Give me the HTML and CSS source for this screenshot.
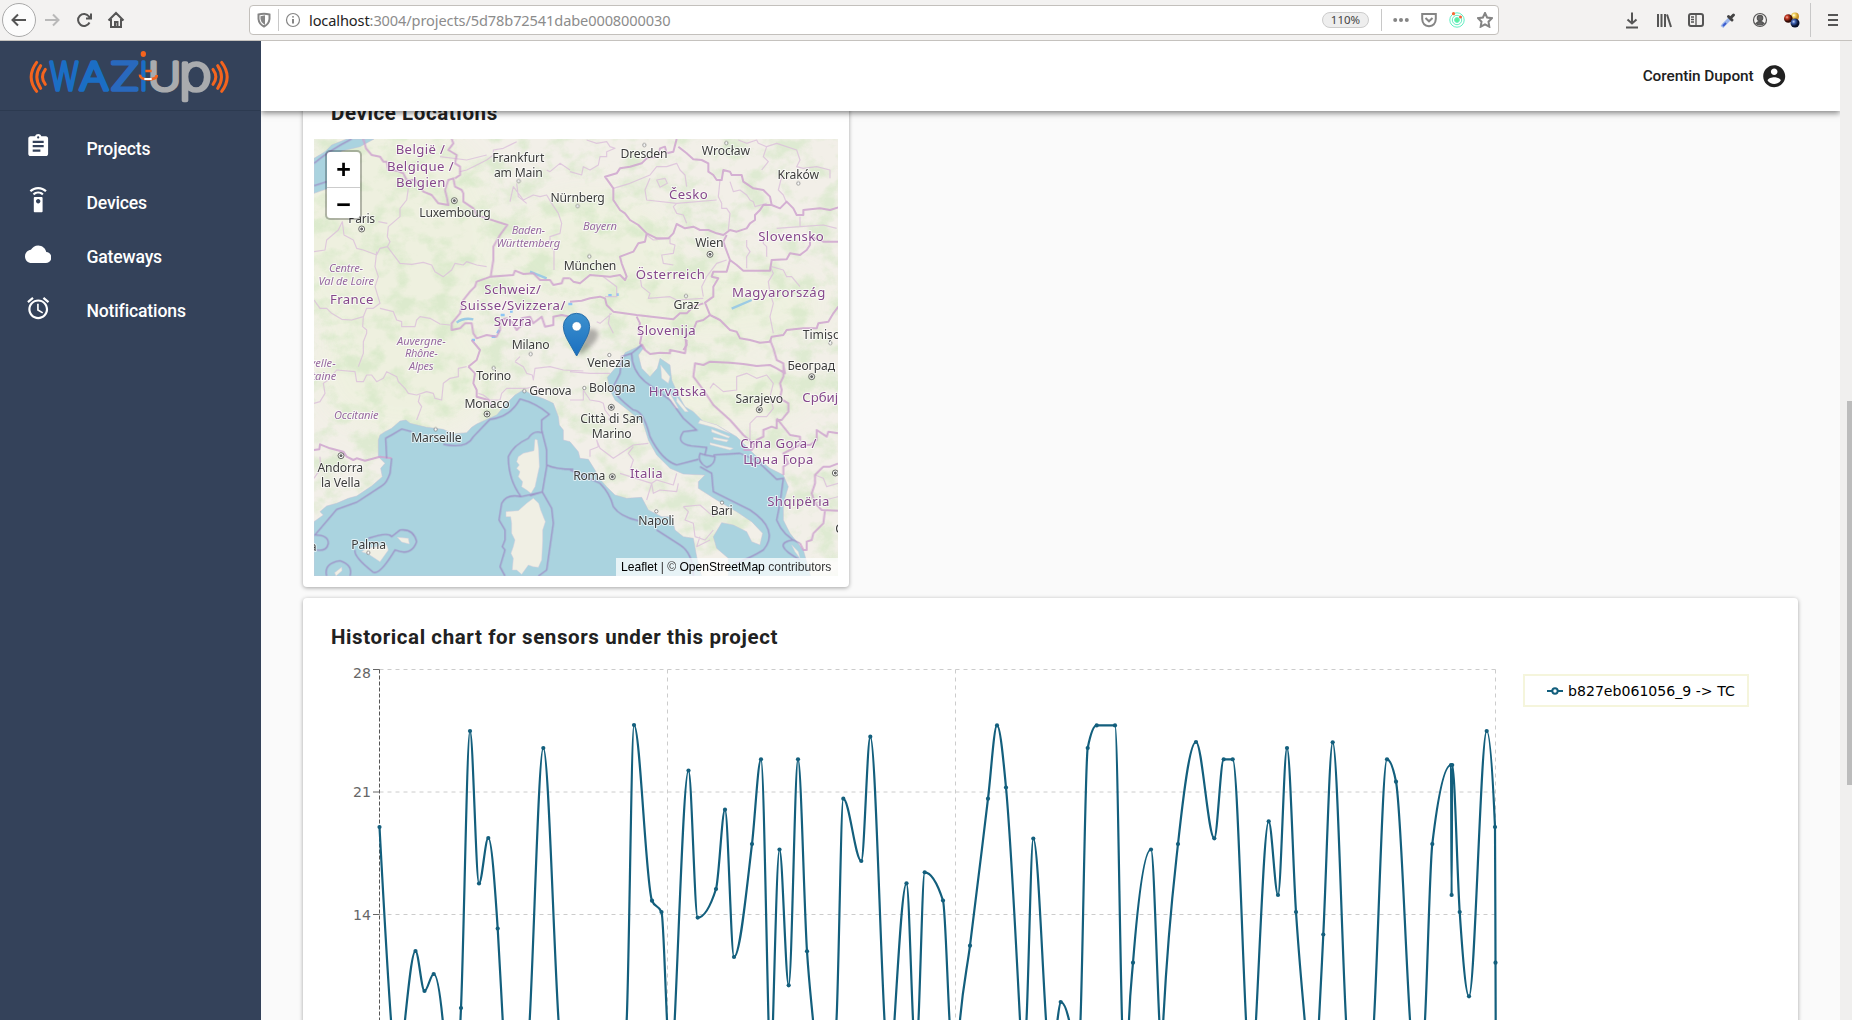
FILE: index.html
```html
<!DOCTYPE html>
<html lang="en">
<head>
<meta charset="utf-8">
<title>Waziup</title>
<link rel="stylesheet" href="styles.css">
</head>
<body>
<div class="browser">
  <div class="tools-left">
    <span class="back"><svg width="18" height="18" viewBox="0 0 18 18" class="ic"><path d="M16 9H3M8 3.5L2.500 9L8 14.500"/></svg></span>
    <svg width="18" height="18" viewBox="0 0 18 18" class="ic faded"><path d="M2 9H15M10 3.500L15.500 9L10 14.500"/></svg>
    <svg width="18" height="18" viewBox="0 0 18 18" class="ic"><path d="M14.500 11.500A6 6 0 1 1 14 5.500L15.500 7M16 2.500V7.500H11"/></svg>
    <svg width="18" height="18" viewBox="0 0 18 18" class="ic"><path d="M1.500 9.500L9 2L16.500 9.500M4 8V16H14V8M8 16V11H10.500V16"/></svg>
  </div>
  <div class="urlbar">
    <svg width="16" height="16" viewBox="0 0 16 16" class="ic grey"><path d="M2.500 2.500Q8 .8 13.500 2.500V7Q13 12 8 14.500Q3 12 2.500 7Z"/><path d="M8 4.500V11Q5.800 9.500 5.500 7V5Z" fill="#888"/></svg>
    <i class="sep"></i>
    <svg width="16" height="16" viewBox="0 0 16 16" class="ic grey thin"><circle cx="8" cy="8" r="6.500"/><path d="M8 7V11.500M8 4.200V5.600" stroke-width="2"/></svg>
    <span class="url"><b>localhost</b>:3004/projects/5d78b72541dabe0008000030</span>
    <span class="pct">110%</span>
    <i class="sep"></i>
    <svg class="dots" width="16" height="16" viewBox="0 0 16 16" fill="#858585"><circle cx="2.200" cy="8" r="2"/><circle cx="8" cy="8" r="2"/><circle cx="13.800" cy="8" r="2"/></svg>
    <svg width="16" height="16" viewBox="0 0 16 16" class="ic grey"><path d="M1.200 2H14.800V7Q14.500 13.500 8 14.300Q1.500 13.500 1.200 7ZM4.500 6L8 9.300L11.500 6"/></svg>
    <svg width="16" height="16" viewBox="0 0 16 16" fill="none" stroke="#62eec1"><circle cx="8" cy="8" r="7.200"/><circle cx="8" cy="8" r="4.700"/><circle cx="8" cy="8" r="2.400" fill="#5df09b"/><circle cx="4.500" cy="1.700" r="1.600" fill="#f66a35" stroke="none"/><circle cx="11.500" cy="5" r="1.500" fill="#f6613b" stroke="none"/></svg>
    <svg width="16" height="16" viewBox="0 0 16 16" class="ic grey"><path d="M8 1L10.100 5.500L15 6.200L11.500 9.700L12.300 14.700L8 12.300L3.700 14.700L4.500 9.700L1 6.200L5.900 5.500Z"/></svg>
  </div>
  <div class="tools-right">
    <svg width="16" height="18" viewBox="0 0 16 18" class="ic"><path d="M8 1.500V12.500M3.500 8.500L8 12.500L12.500 8.500M2 16.500H14"/></svg>
    <svg width="16" height="18" viewBox="0 0 16 18" class="ic"><path d="M2 3V16M5.500 3V16M9 3V16M11 3.500L15 16" /></svg>
    <svg width="16" height="18" viewBox="0 0 16 18" class="ic"><rect x="1" y="3" width="14" height="12" rx="2"/><path d="M8 3V15M3 6H6M3 8.500H6M3 11H6" stroke-width="1.300"/></svg>
    <svg width="16" height="18" viewBox="0 0 16 18"><path d="M10 7.500L3.500 14L2 16" fill="none" stroke="#9ab4e8" stroke-width="3.500"/><path d="M6 12L3 15" stroke="#3b5dd0" stroke-width="2"/><path d="M8.500 5.500L12 9M10.500 7L13.500 4" stroke="#444" stroke-width="3" stroke-linecap="round"/></svg>
    <svg width="16" height="18" viewBox="0 0 16 18" class="ic thin"><circle cx="8" cy="9" r="6.500"/><circle cx="8" cy="7" r="2.700" fill="#666"/><path d="M4 12.500Q8 8.500 12 12.500Q8 15.500 4 12.500Z" fill="#666"/></svg>
    <svg width="16" height="18" viewBox="0 0 16 18"><defs><radialGradient id="ry" cx=".35" cy=".35"><stop stop-color="#fff"/><stop offset=".4" stop-color="#f3d765"/><stop offset="1" stop-color="#c9932b"/></radialGradient><radialGradient id="rr" cx=".35" cy=".35"><stop stop-color="#f6b5a0"/><stop offset=".4" stop-color="#c23622"/><stop offset="1" stop-color="#330b06"/></radialGradient><radialGradient id="rb" cx=".35" cy=".35"><stop stop-color="#c7d5f6"/><stop offset=".4" stop-color="#3e62b4"/><stop offset="1" stop-color="#07102c"/></radialGradient></defs><circle cx="11" cy="5.500" r="4" fill="url(#ry)"/><circle cx="4.300" cy="7.500" r="4.300" fill="url(#rr)"/><circle cx="11" cy="12" r="4.500" fill="url(#rb)"/></svg>
    <i class="sep"></i>
    <svg width="14" height="18" viewBox="0 0 14 18" class="ic"><path d="M2 4H12M2 9H12M2 14H12"/></svg>
  </div>
</div>
<div class="app">
  <aside class="sidebar">
    <div class="brand">
      <svg width="201" height="52" viewBox="88 150 603 156" fill="none">
        <g stroke="#f4641e" stroke-width="9" stroke-linecap="round"><path d="M111 187Q78 231 111 274M123 197Q100 231 123 265M137 208Q120 231 137 253M666 187Q699 231 666 274M654 197Q677 231 654 265M640 208Q657 231 640 253"/></g>
        <g class="word">
          <text x="150" y="271" class="blue" textLength="86" lengthAdjust="spacingAndGlyphs">W</text>
          <text x="239" y="271" class="blue" textLength="88" lengthAdjust="spacingAndGlyphs">A</text>
          <text x="330" y="271" class="blue z" textLength="90" lengthAdjust="spacingAndGlyphs">Z</text>
          <text x="420" y="271" class="blue" textLength="23" lengthAdjust="spacingAndGlyphs">I</text>
          <text x="446" y="271" class="silver" textLength="98" lengthAdjust="spacingAndGlyphs">U</text>
          <text x="537" y="271" class="silver low" textLength="99" lengthAdjust="spacingAndGlyphs">p</text>
        </g>
        <ellipse cx="431" cy="162" rx="8" ry="9" fill="#f4641e"/>
        <path d="M421 224Q420 238 445 238Q472 238 471 225M437 213H456" stroke="#f4641e" stroke-width="8"/><path d="M434 237H456" stroke="#fff" stroke-width="6"/>
      </svg>
    </div>
    <nav>
      <a><svg viewBox="0 0 24 24"><path d="M19 3h-4.180C14.400 1.840 13.300 1 12 1s-2.400.84-2.820 2H5c-1.100 0-2 .9-2 2v14c0 1.100.9 2 2 2h14c1.100 0 2-.9 2-2V5c0-1.100-.9-2-2-2zm-7 0c.55 0 1 .45 1 1s-.45 1-1 1-1-.45-1-1 .45-1 1-1zm2 14H7v-2h7v2zm3-4H7v-2h10v2zm0-4H7V7h10v2z"/></svg><span>Projects</span></a>
      <a><svg viewBox="0 0 24 24"><path d="M15 9H9c-.55 0-1 .45-1 1v12c0 .55.450 1 1 1h6c.55 0 1-.45 1-1V10c0-.55-.45-1-1-1zm-3 6c-1.100 0-2-.9-2-2s.9-2 2-2 2 .9 2 2-.9 2-2 2zM7.050 6.050l1.410 1.410C9.370 6.560 10.620 6 12 6s2.630.56 3.540 1.460l1.410-1.410C15.680 4.780 13.930 4 12 4s-3.680.78-4.950 2.050zM12 0C8.960 0 6.210 1.230 4.220 3.220l1.410 1.410C7.260 3.010 9.510 2 12 2s4.740 1.010 6.360 2.640l1.410-1.410C17.790 1.230 15.040 0 12 0z"/></svg><span>Devices</span></a>
      <a><svg viewBox="0 0 24 24"><path d="M19.350 10.040C18.670 6.590 15.640 4 12 4 9.110 4 6.600 5.640 5.350 8.040 2.340 8.360 0 10.910 0 14c0 3.310 2.690 6 6 6h13c2.760 0 5-2.240 5-5 0-2.640-2.050-4.780-4.650-4.960z"/></svg><span>Gateways</span></a>
      <a><svg viewBox="0 0 24 24"><path d="M22 5.720l-4.600-3.860-1.290 1.530 4.600 3.860L22 5.720zM7.880 3.390L6.600 1.860 2 5.710l1.290 1.530 4.590-3.850zM12.500 8H11v6l4.750 2.850.75-1.230-4-2.370V8zM12 4c-4.970 0-9 4.030-9 9s4.020 9 9 9c4.970 0 9-4.030 9-9s-4.030-9-9-9zm0 16c-3.870 0-7-3.130-7-7s3.130-7 7-7 7 3.130 7 7-3.130 7-7 7z"/></svg><span>Notifications</span></a>
    </nav>
  </aside>
  <main>
    <header><span>Corentin Dupont</span><svg viewBox="0 0 24 24"><path d="M12 2C6.480 2 2 6.480 2 12s4.480 10 10 10 10-4.480 10-10S17.520 2 12 2zm0 3c1.660 0 3 1.340 3 3s-1.340 3-3 3-3-1.340-3-3 1.340-3 3-3zm0 14.200c-2.500 0-4.710-1.280-6-3.220.03-1.990 4-3.080 6-3.080 1.990 0 5.970 1.090 6 3.080-1.290 1.940-3.500 3.220-6 3.220z"/></svg></header>
    <div class="content">
      <section class="card map-card">
        <h2>Device Locations</h2>
        <div class="map">
          <svg class="tiles" width="524" height="437" viewBox="0 0 1572 1311">
            <defs>
              <filter id="blur" x="-30%" y="-30%" width="160%" height="160%"><feGaussianBlur stdDeviation="45"/></filter>
              <filter id="relief" x="0" y="0" width="100%" height="100%" color-interpolation-filters="sRGB"><feTurbulence type="fractalNoise" baseFrequency=".014 .017" numOctaves="5" seed="8"/><feColorMatrix values="0 0 0 0 .80  0 0 0 0 .90  0 0 0 0 .74  3.600 0 0 0 -1.600"/></filter>
              <linearGradient id="pin" x2="0" y2="1"><stop stop-color="#3d91ce"/><stop offset="1" stop-color="#1a6fc0"/></linearGradient>
            </defs>
            <rect width="1572" height="1311" fill="#f2efe8"/>
            <g filter="url(#blur)" fill="#eef1df" opacity=".9"><ellipse cx="230" cy="300" rx="330" ry="340"/><ellipse cx="280" cy="690" rx="270" ry="200"/><ellipse cx="830" cy="330" rx="260" ry="170"/><ellipse cx="1200" cy="500" rx="330" ry="120"/><ellipse cx="1250" cy="760" rx="240" ry="80"/></g>
            <rect width="1572" height="1311" filter="url(#relief)" opacity=".5"/>
            <g class="sea">
              <path transform="translate(-42,-117)" d="M42 175L75 155L95 135L140 117H222L180 140L125 153L95 190L85 265L42 280Z"/>
              <path transform="translate(-42,603)" d="M42 545L70 525L60 515L80 498L110 490L145 475L170 468L215 438L247 410L242 385L255 370L235 350L235 300L240 285L255 275L275 265L300 243L318 240L330 250L380 262L430 268L460 282L500 278L515 262L530 252L545 245L590 225L620 190L645 165L670 150L700 165L735 178L760 190L775 230L778 255L790 270L790 300L810 305L835 335L840 355L865 358L885 390L895 412L920 440L945 465L980 475L1025 472L1045 510L1085 530L1115 530L1125 570L1150 590L1180 595L1190 650L1205 708H42Z"/>
              <path transform="translate(768,603)" d="M215 12L200 22L165 38L150 70L135 85L112 112L120 150L135 180L180 215L220 250L235 300L260 345L300 385L340 402L405 405L385 425L385 445L440 480L500 515L545 545L578 580L570 615L545 605L530 575L490 555L455 548L430 590L440 625L475 655V708H722L700 630L660 580L640 540V490L655 440L640 405L600 385L570 360L500 290L440 255L400 245L370 215L345 200L325 165L305 120L300 75L270 55L262 85L240 110L215 85L205 45L220 25Z"/>
            </g>
            <g class="isle">
              <g transform="translate(-42,603)"><path d="M705 298L712 300L716 330L718 380L705 440L693 460L680 450L665 440L668 425L655 410L660 395L650 385L658 375L650 365L655 350L670 340L702 332Z"/><path d="M700 475L716 490L722 510L736 545L728 570L728 600L725 660L715 682L700 680L685 675L665 703L650 690L637 690L640 655L633 640L640 620L645 600L635 580L635 550L632 530L618 530L618 515L655 512L680 490Z"/><path d="M185 635L200 625L260 615L265 630L240 665L205 642Z"/><path d="M292 592L325 595L328 612L305 606Z"/><path d="M104 698L125 682L126 692L108 708Z"/></g>
              <g transform="translate(768,603)"><path d="M272 75L300 110L295 130L275 115ZM300 160L325 205L315 205L295 170ZM320 170L355 215L345 215L320 185ZM390 240L440 255L480 280L430 262L385 250ZM425 268L480 290L475 294L425 276ZM430 292L475 300L470 306L430 298ZM420 308L490 325L480 330L420 314ZM665 615L685 635L690 655L675 635Z"/></g>
            </g>
            <g class="lake" transform="translate(-42,-117)"><path d="M470 668Q490 652 520 658M690 515L740 535M1295 626L1355 600"/><path class="pond" d="M515 720h10M575 710h12M592 700l6 -10M602 645h12M630 634h8M805 612h12M925 586h10M948 584h8"/></g>
            <g class="thinb" transform="translate(-42,-117)"><path d="M42 455L75 450L80 420L115 390L127 365L132 405L160 420L170 445L190 450L230 465L240 445L262 440L270 425L262 410L265 380L300 350L300 325L320 300L325 265M262 440L300 490L335 493L370 487L395 495L405 515L430 530L455 510L465 490L490 495L500 485L530 495L560 500M262 370L235 365M230 455L225 500L235 530L225 560L240 610L220 625L200 625L190 650L155 660L125 658L95 640L80 625L60 625L42 600M240 625L280 635L290 660L305 665L305 680L345 680L350 660L360 650L390 655L420 672L450 675M190 650L188 680L200 690L200 700L190 725L190 760L175 800M480 215L500 210L520 200L560 180L580 165L580 150L610 145L650 125M420 170L500 180L560 165M630 305L640 260L670 300L700 285L720 290L740 285L755 310L775 340L785 370L780 400L750 410V440L762 450L762 510M650 250L655 290L680 310M740 210L750 215L780 190L810 210"/></g>
            <g class="thinb" transform="translate(768,-117)"><path d="M50 120L80 130L110 125L120 140L135 145L110 155L110 170L90 170L85 195L60 210L40 200L35 225L0 215M130 265L180 250L240 225L260 200L290 200L320 190L330 210L345 225L350 260M240 235L225 270L230 300L320 310L310 320L320 340L340 345L350 370M320 310L440 300M450 240L445 290L455 310L455 325L470 325L480 340L475 390M480 245L490 275L510 270L530 285L540 300L550 305L555 320L590 310M260 240L285 235L292 250L270 262ZM505 120L530 130L560 120L565 130L590 140L580 170L595 185L575 210M590 140L620 130L680 150L690 180L680 200L700 205L740 200L780 210V235M640 210L625 270L640 285L650 310M690 350L690 380L760 375L800 385M620 385L690 380M580 400L580 430L590 440L590 470M230 405L250 420L300 415L300 430L315 435L310 460L275 465L280 490L310 495M210 530L215 560L240 580L235 595L300 590L320 600L400 595M530 420V440L540 455L530 470V505M400 590L395 560L410 530L440 490L470 480M600 500L610 520L595 545L600 580L610 610L600 650L610 700M605 500L640 510L650 530L665 530L690 560M100 530L140 560L140 590L105 590M120 640L115 670L130 700M125 640L90 670L80 665"/></g>
            <g class="thinb" transform="translate(-42,603)"><path d="M42 190L60 185L75 160L70 130L85 120L110 90L165 95L170 125L190 125L200 105L215 105L230 125L250 115L260 95L290 110L295 125L315 145L325 160L350 165L380 155L400 160L405 175L425 180L430 130L450 115L475 110V85L500 80M360 165L355 185L365 200L350 240M535 160L550 165L570 180L600 180L605 160L620 145L680 145L700 140L740 155M645 65L670 80L680 100L697 105L700 120L705 85L750 80L790 90L850 93M660 50L645 65M42 415L62 385L60 350"/></g>
            <g class="thinb" transform="translate(768,603)"><path d="M0 95L60 100L120 100M0 180L40 180L40 150L60 180L90 185L100 190L105 210L120 230L115 240M60 350L60 330L85 320L80 300L90 325L130 355L160 335L190 315L235 310M190 320L175 340L190 360L180 390L205 420M150 400L245 430L260 420L310 435L320 400M245 430L230 480M245 430L250 460L270 450L320 455L325 430M340 500L355 515L345 540L370 550L375 590M340 500L390 495L430 530L440 515M375 590L405 600L430 570M420 145L430 130L460 155L500 150L500 110L530 100L560 115L590 105L610 130L600 170L610 205L590 230L560 230L540 250L540 305M390 590L380 620L420 600M735 405L760 415L770 440L805 430M735 490L765 480L805 470"/></g>
            <g class="border">
              <path transform="translate(-42,-117)" d="M190 117L198 145L215 165L240 170L250 185L260 185L265 210L290 212L310 220L320 240L345 240L370 275L395 285L415 310L445 315L440 290L435 270L445 240L460 235L465 260L485 270L490 280L490 305L520 325L530 345L560 355L622 375L600 405L580 440L580 480L572 530L600 528L640 525L645 512L670 522L700 520L720 540L750 540L760 555L785 550L790 535L810 535M455 117L460 130L445 150L470 165L465 190L480 200L480 225L465 235M572 530L530 545L525 560L510 575L490 600L480 640L455 670L455 690L480 685L495 670L515 670L520 700L530 715L560 705L590 710L600 690L600 660L620 655L635 665L650 690L665 675V655L690 650L700 670L725 650L735 680L760 675V650L785 645L810 650"/>
              <path transform="translate(768,-117)" d="M320 117L310 155L290 160L285 140L270 145L265 170L230 175L215 190L180 200L150 205L140 220L105 230L130 265L130 300L150 330L165 340L180 360L205 375L230 400L260 415L295 415L310 400L320 372L345 385L370 380L390 390L415 390L440 400L460 405L480 390L500 395L530 385L540 370L555 360L555 345L570 330L580 315L605 315L600 290L580 270L550 265L520 245L515 225L485 225L480 215L460 210L455 240L440 240L430 225L415 215V190L395 180L370 178L350 160L325 140M605 315L630 325L650 305L670 325L680 345L700 345L700 330L750 325L780 330L805 322M470 405L460 425L465 440L480 480L500 495L520 512L600 512L605 480L650 478L660 460L690 465L710 450L720 435L720 410L760 425L805 425M480 480L470 515L430 515L425 530L445 535L430 560V590L405 608L420 645L450 660L480 690L500 695L510 715L540 720L570 728L600 725L605 710L640 705L650 690L700 685L740 685L745 670L775 665L790 640L805 620M230 400L225 425L205 430L190 455L150 470L155 490L170 530L165 540L150 525L120 530L60 525L30 550L10 545L0 535M0 605L35 602L60 595L90 590L105 595L110 615L130 635L200 645L310 658L330 640L350 640L370 620L400 610M420 645L400 660L380 665L370 690L345 710L350 735L340 750M200 650L210 670L205 690L215 705L210 730L225 750"/>
              <path transform="translate(-42,603)" d="M42 330L58 328L60 313L90 325L130 335L140 350L160 360L170 355L195 362L240 350L275 355M505 80L525 100L520 130L530 150L530 170L565 180L580 205M515 0L540 30L530 60L505 80"/>
              <path transform="translate(768,603)" d="M215 12L225 30L240 42L270 38L300 40L300 30L325 35L345 40L350 0M600 0L610 25L620 60L640 70L640 110L630 130L635 150L630 175L655 190V215L635 240L620 240L620 265L605 260L580 270V290L560 300L555 315L520 285L480 240L430 195L400 150L370 110L375 70L400 75L420 65L480 68L520 72L560 78L600 75L620 85L645 100L640 75M620 235L660 285L690 290L690 315L720 315L740 300L740 270L770 290L775 275L805 280M555 315L545 330L520 330M640 405L640 380L655 370L640 340L660 330L690 315M805 370L780 380L760 380L735 405L735 430L725 460L735 490L755 510L805 512M765 510L760 550L730 580L725 600L710 605L710 630L700 630L690 610"/>
            </g>
            <g class="marine">
              <path transform="translate(-42,-117)" d="M42 190Q90 150 155 117M42 257L80 245"/>
              <path transform="translate(-42,603)" d="M260 355L257 295L275 285L305 267L335 275M430 313Q500 328 520 290L570 238Q630 232 660 177Q710 190 748 223L725 240V270L740 330V380L727 456L663 470Q625 420 625 350Q640 315 685 295Q700 270 725 278M740 375Q765 388 820 388M727 456L755 505L760 550L740 690L715 708M663 470Q620 460 605 490L597 540L615 570V600L607 620L615 630L600 680L615 708M727 456L690 467M275 355L270 400Q260 430 245 438L170 487L110 508L45 585Q85 585 85 610Q80 635 50 630M165 630Q160 650 220 697Q240 705 285 630Q335 650 350 605Q340 565 300 570L275 590Q265 575 205 595M80 708Q70 670 120 662Q160 675 150 708"/>
              <path transform="translate(768,603)" d="M215 15L185 40Q185 90 225 125L300 180L340 235L380 270L340 275Q315 310 365 318L410 322L405 345L435 350Q435 375 410 382Q380 365 390 340L405 345M185 40L155 50L150 100L130 140Q130 165 190 210Q220 210 240 290Q275 360 320 375L385 358M390 380L425 400L430 455L540 510Q630 570 580 630Q540 655 495 670M430 345L510 340Q560 360 580 380L620 418L640 415L630 490L620 540Q640 590 690 610L670 600Q600 610 690 660M0 390L90 430Q120 460 130 500Q150 530 205 542M260 570L330 615Q370 640 370 708"/>
            </g>
            <g class="dotm">
              <g transform="translate(-42,-117)"><circle cx="656" cy="243" r="5"/><circle cx="833" cy="318" r="5"/></g>
              <g transform="translate(768,-117)"><circle cx="223" cy="135" r="5"/><circle cx="469" cy="129" r="5"/><circle cx="685" cy="250" r="5"/><circle cx="58" cy="469" r="5"/><circle cx="348" cy="588" r="5"/><circle cx="781" cy="729" r="5"/></g>
              <g transform="translate(-42,603)"><circle cx="692" cy="42" r="5"/><circle cx="581" cy="84" r="5"/><circle cx="673" cy="153" r="5"/><circle cx="407" cy="268" r="5"/><circle cx="205" cy="638" r="5"/></g>
              <g transform="translate(768,603)"><circle cx="118" cy="45" r="5"/><circle cx="43" cy="144" r="5"/><circle cx="456" cy="488" r="5"/><circle cx="259" cy="514" r="5"/></g>
            </g>
            <g class="capital">
              <circle cx="421" cy="185" r="6"/><circle cx="143" cy="270" r="6"/><circle cx="1188" cy="346" r="6"/><circle cx="519" cy="825" r="6"/><circle cx="81" cy="950" r="6"/><circle cx="892" cy="805" r="6"/><circle cx="1493" cy="713" r="6"/><circle cx="1336" cy="812" r="6"/><circle cx="895" cy="1013" r="6"/><circle cx="1564" cy="1002" r="6"/>
            </g>
            <g class="capring">
              <circle cx="421" cy="185" r="9"/><circle cx="143" cy="270" r="9"/><circle cx="1188" cy="346" r="9"/><circle cx="519" cy="825" r="9"/><circle cx="81" cy="950" r="9"/><circle cx="892" cy="805" r="9"/><circle cx="1493" cy="713" r="9"/><circle cx="1336" cy="812" r="9"/><circle cx="895" cy="1013" r="9"/><circle cx="1564" cy="1002" r="9"/>
            </g>
            <g class="lbl" transform="translate(-42,-117)">
              <text x="655" y="187" textLength="156">Frankfurt</text><text x="655" y="231" textLength="146">am Main</text><text x="465" y="350" textLength="214">Luxembourg</text><text x="185" y="368" textLength="80">Paris</text><text x="833" y="307" textLength="163">Nürnberg</text><text x="870" y="509" textLength="158">München</text><text x="692" y="747" textLength="113">Milano</text>
              <g class="country"><text x="361" y="163" textLength="148">België /</text><text x="361" y="212" textLength="200">Belgique /</text><text x="362" y="261" textLength="148">Belgien</text><text x="155" y="611" textLength="130">France</text><text x="638" y="581" textLength="170">Schweiz/</text><text x="638" y="630" textLength="316">Suisse/Svizzera/</text><text x="638" y="678" textLength="114">Svizra</text></g>
              <g class="region"><text x="138" y="515" textLength="102">Centre-</text><text x="139" y="555" textLength="167">Val de Loire</text><text x="685" y="402" textLength="100">Baden-</text><text x="685" y="441" textLength="191">Württemberg</text><text x="364" y="734" textLength="146">Auvergne-</text><text x="364" y="772" textLength="98">Rhône-</text><text x="364" y="811" textLength="74">Alpes</text><text x="900" y="391" textLength="102">Bayern</text></g>
            </g>
            <g class="lbl" transform="translate(768,-117)">
              <text x="222" y="175" textLength="141">Dresden</text><text x="468" y="166" textLength="145">Wrocław</text><text x="685" y="237" textLength="125">Kraków</text><text x="418" y="442" textLength="85">Wien</text><text x="349" y="628" textLength="77">Graz</text><text x="698" y="717" class="start">Timișoara</text>
              <g class="country"><text x="355" y="298" textLength="116">Česko</text><text x="663" y="424" textLength="197">Slovensko</text><text x="301" y="536" textLength="207">Österreich</text><text x="626" y="591" textLength="280">Magyarország</text><text x="289" y="706" textLength="176">Slovenija</text></g>
            </g>
            <g class="lbl" transform="translate(-42,603)">
              <text x="581" y="121" textLength="105">Torino</text><text x="751" y="166" textLength="127">Genova</text><text x="561" y="203" textLength="135">Monaco</text><text x="409" y="306" textLength="151">Marseille</text><text x="121" y="395" textLength="137">Andorra</text><text x="122" y="440" textLength="118">la Vella</text><text x="206" y="626" textLength="104">Palma</text><text x="50" y="634" class="end">Valencia</text>
              <g class="region"><text x="107" y="80" class="end">Nouvelle-</text><text x="109" y="119" class="end">Aquitaine</text><text x="169" y="238" textLength="134">Occitanie</text></g>
            </g>
            <g class="lbl" transform="translate(768,603)">
              <text x="117" y="82" textLength="130">Venezia</text><text x="127" y="157" textLength="140">Bologna</text><text x="125" y="249" textLength="189">Città di San</text><text x="125" y="293" textLength="120">Marino</text><text x="58" y="421" textLength="96">Roma</text><text x="455" y="525" textLength="66">Bari</text><text x="259" y="556" textLength="109">Napoli</text><text x="568" y="190" textLength="143">Sarajevo</text><text x="724" y="90" textLength="143">Београд</text><text x="796" y="578" class="start">Скопје</text>
              <g class="country"><text x="323" y="168" textLength="173">Hrvatska</text><text x="697" y="185" class="start">Србија</text><text x="625" y="323" textLength="228">Crna Gora /</text><text x="625" y="372" textLength="210">Црна Гора</text><text x="229" y="415" textLength="98">Italia</text><text x="685" y="497" textLength="187">Shqipëria</text></g>
            </g>
            <path class="pin-shadow" d="M790 645L808 590Q820 562 845 572Q862 585 840 612Q815 640 790 648Z"/>
            <g transform="translate(768,-117)"><path d="M20 768L-10 715Q-20 695-20 680A39.500 40 0 0 1 59 680Q59 695 49 715Z" fill="url(#pin)" stroke="#286da8" stroke-width="3"/><circle cx="20" cy="679" r="14" fill="#fff" stroke="#2c77b4" stroke-width="2"/></g>
          </svg>
          <div class="zoomctl"><span>+</span><span>−</span></div>
          <div class="credit"><b>Leaflet</b> | © <b>OpenStreetMap</b> contributors</div>
        </div>
      </section>
      <section class="card chart-card">
        <h2>Historical chart for sensors under this project</h2>
        <div class="chart">
          <svg id="plot" width="1176" height="380" viewBox="340 660 1176 380">
            <g stroke="#ccc" stroke-dasharray="4 4" fill="none"><path d="M379.500 669.500H1495.500M379.500 792H1495.500M379.500 914.500H1495.500M667.500 669.500V1040M955.500 669.500V1040M1495.500 669.500V1040"/></g>
            <path d="M379.500 669.500V1040" stroke="#555" stroke-dasharray="4 2"/>
            <path d="M373 669.500H379.500M373 792H379.500M373 914.500H379.500" stroke="#666"/>
            <g class="axis"><text x="371" y="678">28</text><text x="371" y="797">21</text><text x="371" y="920">14</text></g>
          </svg>
          <div class="legend"><svg width="16" height="10" viewBox="0 0 16 10" fill="none" stroke="#135f7d" stroke-width="2"><path d="M0 5H5M11 5H16"/><circle cx="8" cy="5" r="2.700"/></svg><span>b827eb061056_9 -&gt; TC</span></div>
        </div>
      </section>
    </div>
  </main>
  <div class="scroll"><i></i></div>
</div>
<script src="chart.js"></script>
</body>
</html>
```
FILE: styles.css
```css
* { box-sizing: border-box; }
body { margin: 0; width: 1852px; height: 1020px; overflow: hidden; font-family: Roboto, sans-serif; color: #212121; display: flex; flex-direction: column; }
.browser { height: 41px; flex: none; background: #f3f2f1; border-bottom: 1px solid #c5c2be; display: flex; align-items: center; }
.ic { fill: none; stroke: #555; stroke-width: 2; }
.ic.grey { stroke: #858585; }
.ic.thin { stroke-width: 1.2; }
.ic.faded { stroke: #b9b9b9; }
.tools-left { width: 249px; padding: 0 0 1px 2px; display: flex; align-items: center; gap: 14px; }
.back { width: 34px; height: 34px; border: 1px solid #aaa; border-radius: 50%; background: #fcfcfc; display: flex; align-items: center; justify-content: center; margin-right: -7px; }
.urlbar { width: 1250px; height: 30px; border: 1px solid #c3c0bc; border-radius: 4px; background: #fff; display: flex; align-items: center; gap: 6px; padding: 0 5px 0 6px; }
.sep { width: 1px; height: 22px; background: #c8c8c8; flex: none; }
.url { font: 14.6px "Noto Sans", sans-serif; color: #8c8c8c; flex: 1; letter-spacing: -.12px; margin-left: 2px; }
.url b { font-weight: 400; color: #222; }
.pct { width: 47px; height: 16px; border-radius: 8px; background: #eee; border: 1px solid #ccc; font: 11.5px/14px "Noto Sans", sans-serif; text-align: center; color: #444; margin-right: 6px; }
.urlbar .dots { margin-left: 5px; }
.urlbar .dots ~ svg { margin-left: 6px; }
.tools-right { flex: 1; display: flex; align-items: center; justify-content: flex-end; gap: 16px; padding-right: 12px; }
.tools-right .sep { height: 34px; margin: 0 -1px 0 -6px; }
.app { flex: 1; min-height: 0; display: flex; }
.sidebar { width: 261px; flex: none; background: #34425a; color: #fff; }
.brand { height: 70px; border-bottom: 1px solid #2c3a50; padding: 9px 0 0 29px; }
.brand svg { display: block; overflow: visible; }
.word { font: 200 116px Inter, sans-serif; stroke-width: 11; stroke-linejoin: round; }
.blue { fill: #1b6ec4; stroke: #1b6ec4; }
.z { fill: #2969bd; stroke: #2969bd; }
.silver { fill: #a9abae; stroke: #a9abae; }
.low { font-size: 148px; }
nav { padding-top: 8px; }
nav a { height: 54px; display: flex; align-items: center; padding-left: 25px; gap: 35px; font: 500 17.6px Roboto, sans-serif; letter-spacing: -.15px; }
nav svg { width: 26.4px; height: 26.4px; fill: #fff; }
nav span { padding-top: 5px; }
main { width: 1579px; flex: none; background: #fafafa; display: flex; flex-direction: column; overflow: hidden; }
header { height: 70px; flex: none; position: relative; background: #fff; box-shadow: 0 2px 6px rgba(0,0,0,.5); display: flex; align-items: center; justify-content: flex-end; gap: 7px; padding-right: 53px; font: 500 15.4px Roboto, sans-serif; letter-spacing: -.07px; }
header svg { width: 26.4px; height: 26.4px; fill: #212121; }
.content { padding: 0 42px; margin-top: -30px; }
.card { background: #fff; border-radius: 4px; box-shadow: 0 1px 4px rgba(0,0,0,.35); }
h2 { margin: 0; font: 700 20.5px/24px Roboto, sans-serif; letter-spacing: .6px; }
.map-card { width: 546px; height: 506px; padding: 20px 11px 11px; }
.map-card h2 { padding-left: 17px; height: 38px; }
.map { position: relative; width: 524px; height: 437px; overflow: hidden; }
.tiles { display: block; }
.sea { fill: #aad3df; stroke: #c4c0d6; stroke-width: 1.5; }
.isle { fill: #f0efe4; stroke: #d6cfdc; stroke-width: 1.5; }
.lake { fill: none; stroke: #9ccbe4; stroke-width: 7; }
.pond { stroke: #8cc4f5; stroke-width: 8; }
.thinb { fill: none; stroke: #dbbedb; stroke-width: 3.5; opacity: .8; stroke-linejoin: round; }
.border { fill: none; stroke: #cfa4cf; stroke-width: 6; opacity: .85; stroke-linejoin: round; }
.marine { fill: none; stroke: #9c8bc4; stroke-width: 4; opacity: .9; }
.dotm { fill: #fff; stroke: #777; stroke-width: 2.2; }
.capring { fill: none; stroke: #555; stroke-width: 2.5; }
.capital { fill: #666; stroke: #fff; stroke-width: 3; }
.lbl { font: 36.5px "Noto Sans", sans-serif; fill: #3c3c3c; text-anchor: middle; paint-order: stroke; stroke: rgba(255,255,255,.65); stroke-width: 6; stroke-linejoin: round; }
.country { font-size: 39.5px; fill: #85478b; }
.region { font-size: 33.5px; font-style: italic; fill: #976aa0; }
.start { text-anchor: start; }
.end { text-anchor: end; }
.pin-shadow { fill: #333; opacity: .35; filter: blur(7px); }
.zoomctl { position: absolute; left: 11px; top: 11px; width: 37px; height: 70px; border: 2px solid rgba(0,0,0,.25); background-clip: padding-box; background-color: #fff; border-radius: 5px; display: flex; flex-direction: column; }
.zoomctl span { flex: 1; text-align: center; font: 700 25px/35px "Liberation Sans", sans-serif; color: #000; }
.zoomctl span + span { border-top: 1px solid #ccc; line-height: 32px; }
.credit { position: absolute; right: 0; bottom: 0; height: 18px; width: 222px; background: rgba(255,255,255,.72); font: 12.1px/18px "Liberation Sans", sans-serif; color: #333; padding-left: 5px; white-space: nowrap; }
.credit b { font-weight: 400; color: #000; }
.chart-card { width: 1495px; height: 600px; margin-top: 11px; padding: 27px 0 0 28px; }
.chart { display: flex; align-items: flex-start; margin: 11px 0 0 9px; }
.axis { font: 14.1px "DejaVu Sans", sans-serif; fill: #666; text-anchor: end; }
.curve { fill: none; stroke: #135f7d; stroke-width: 2.2; }
.points { fill: #135f7d; }
.legend { width: 226px; height: 33px; margin: 14px 0 0 7px; border: 2px solid #f5f5dc; display: flex; align-items: center; gap: 5px; padding-left: 22px; font: 14.1px "DejaVu Sans", sans-serif; color: #000; white-space: nowrap; }
.scroll { flex: 1; background: #f0efee; display: flex; justify-content: flex-end; padding-top: 360px; }
.scroll i { width: 5px; height: 384px; background: #bcbcbc; }
```
FILE: chart.js
```js
// Sensor readings in plot coordinates.
const pts = [
  [379.5,827],[391,1020],[398,1100],[405,1020],[415.5,951],[424.5,991],[433.7,974],[442.7,1020],[451,1150],[460,1030],[461,1008],[470,731],[479,883.5],[488.3,838],[497.7,928.6],[502.7,1020],
  [516,1250],[529.7,1020],[543.3,748],[558.5,1020],[592,1400],[626.7,1020],[634,725],[652,900.7],[661.5,912],[667,1020],[671,1100],[674.7,1020],[688.5,770.5],
  [697.7,917.6],[716,889],[725,809.7],[734,957],[752,844],[761,759.3],[768.5,1020],[770.7,1110],[773,1020],[779.5,849.5],[788.7,985.3],[798,759.3],[807,951.3],
  [813,1020],[825,1130],[836.5,1020],[843.3,798.7],[861.3,861],[870.3,736.7],[884.5,1020],[889.5,1110],[894.5,1020],[906.5,883.3],[913,1020],[915.7,1080],[918.5,1020],
  [924.7,872.3],[943,900.5],[949.5,1020],[954,1100],[960,1020],[970,945.7],[988,798.7],[997,725.4],[1006,787.5],[1020,1020],[1023,1080],[1026.5,1020],[1033.3,838.5],
  [1046,1020],[1051,1100],[1057.5,1020],[1060.7,1002],[1069,1020],[1075,1120],[1080.500,1020],[1087.7,748],[1096.7,725.4],[1115,725.4],[1122,1020],[1125.500,1140],
  [1129,1020],[1133,962.7],[1151,849.5],[1159.3,1020],[1161.3,1060],[1163.3,1020],[1178,844],[1196,742],[1214.3,838.3],[1223.7,759.3],[1232.7,759.3],[1246,1020],
  [1251,1120],[1256,1020],[1268.7,821.3],[1278,895],[1287,748],[1296,912],[1304.7,1020],[1312,1100],[1319,1020],[1323.3,934.5],[1332.7,742.3],[1346,1020],
  [1360,1250],[1374,1020],[1387,759.3],[1396,781.7],[1410,1020],[1417.5,1130],[1425,1020],[1432.3,844],[1451,765],[1451.6,895],[1452.2,765],[1459.7,912],[1469,996.3],
  [1486.7,731],[1495,827],[1495.500,962.7],[1495.8,1060]
];
const n = pts.length;
const slope = i => (pts[i + 1][1] - pts[i][1]) / (pts[i + 1][0] - pts[i][0]);
// Monotone tangents, so that the curve never overshoots a reading.
const tan = pts.map((p, i) => {
  if (i === 0 || i === n - 1) return null;
  const h0 = p[0] - pts[i - 1][0], h1 = pts[i + 1][0] - p[0];
  const s0 = slope(i - 1), s1 = slope(i), w = (s0 * h1 + s1 * h0) / (h0 + h1);
  return (Math.sign(s0) + Math.sign(s1)) * Math.min(Math.abs(s0), Math.abs(s1), 0.5 * Math.abs(w));
});
tan[0] = (3 * slope(0) - tan[1]) / 2;
tan[n - 1] = (3 * slope(n - 2) - tan[n - 2]) / 2;
let d = `M${pts[0]}`;
for (let i = 0; i < n - 1; i++) {
  const [x0, y0] = pts[i], [x1, y1] = pts[i + 1], k = (x1 - x0) / 3;
  d += `C${x0 + k},${y0 + k * tan[i]} ${x1 - k},${y1 - k * tan[i + 1]} ${x1},${y1}`;
}
const dots = pts.filter(p => p[1] < 1015).map(p => `<circle cx="${p[0]}" cy="${p[1]}" r="2.1"/>`).join("");
document.getElementById("plot").insertAdjacentHTML("beforeend", `<path class="curve" d="${d}"/><g class="points">${dots}</g>`);
```
